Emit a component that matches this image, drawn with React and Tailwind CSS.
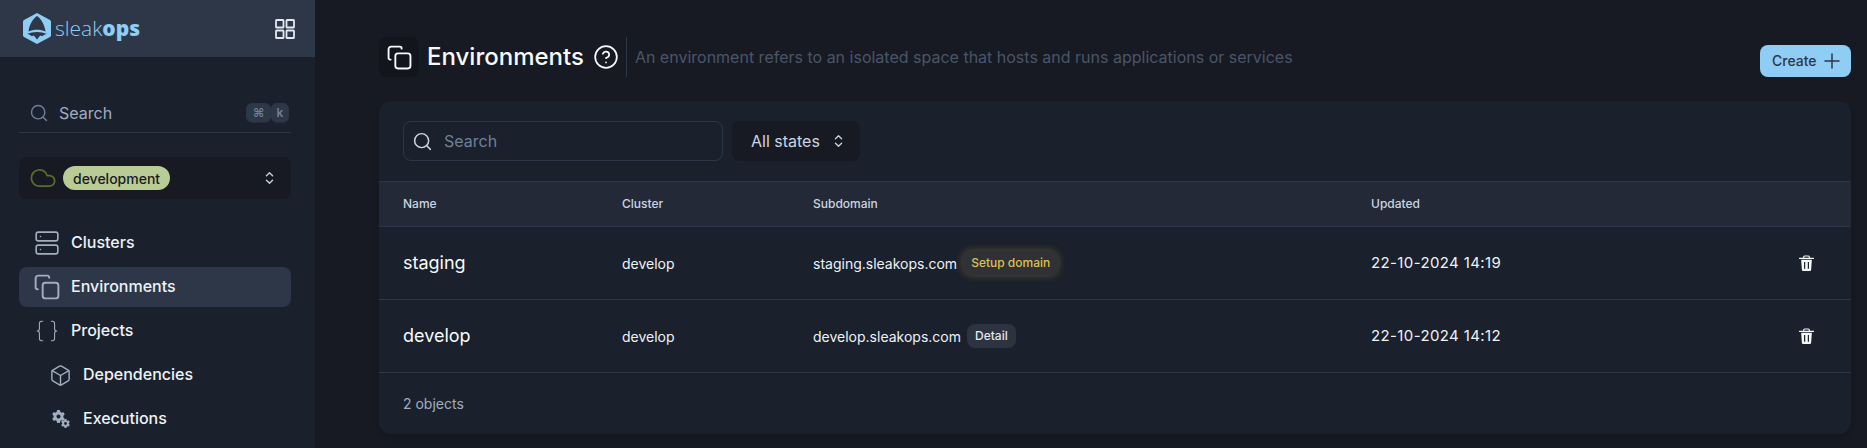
import { Search, Cloud, Server, Braces, Box, CircleHelp, Plus } from "lucide-react";
import { FaGear } from "react-icons/fa6";

const CopyIcon = ({ className }) => (
  <svg viewBox="0 0 24 24" fill="none" stroke="currentColor" strokeWidth="1.8" strokeLinecap="round" strokeLinejoin="round" className={className}>
    <path d="M14 3.5V3a1.5 1.5 0 0 0-1.5-1.5H4A2.5 2.5 0 0 0 1.5 4v8.5A1.5 1.5 0 0 0 3 14h.5" />
    <rect x="8" y="8" width="14.5" height="14.5" rx="2.5" />
  </svg>
);

const UpDown = ({ className }) => (
  <svg viewBox="0 0 10 16" fill="none" stroke="currentColor" strokeWidth="1.5" strokeLinecap="round" strokeLinejoin="round" className={className}>
    <path d="M1.5 5.5 5 2l3.5 3.500" />
    <path d="M1.5 10.500 5 14l3.500-3.500" />
  </svg>
);

const TrashIcon = () => (
  <svg viewBox="0 0 16 18" className="w-[15px] h-[17px] text-[#f7fafc]">
    <path d="M5 3V2a1 1 0 0 1 1-1h4a1 1 0 0 1 1 1v1" fill="none" stroke="currentColor" strokeWidth="1.2" />
    <path d="M.5 3.500h15" stroke="currentColor" strokeWidth="1.2" strokeLinecap="round" />
    <path d="M2.300 5h11.400l-.8 11a1.200 1.200 0 0 1-1.200 1H4.300a1.200 1.200 0 0 1-1.200-1z" fill="currentColor" />
    <path d="M6 7.500v7M10 7.500v7" stroke="#1a202c" strokeWidth="1.3" />
  </svg>
);

const GridIcon = () => (
  <svg viewBox="0 0 20 20" fill="none" stroke="currentColor" strokeWidth="1.8" className="w-5 h-5 text-[#e2e8f0]">
    <rect x="1" y="1" width="7.5" height="7.5" rx="0.6" />
    <rect x="11.5" y="1" width="7.5" height="7.5" rx="0.6" />
    <rect x="1" y="11.5" width="7.5" height="7.5" rx="0.6" />
    <rect x="11.5" y="11.5" width="7.5" height="7.5" rx="0.6" />
  </svg>
);

const Logo = () => (
  <svg viewBox="0 0 30 32" className="w-[30px] h-[33px]">
    <path d="M15 0.500 28 7.500a2 2 0 0 1 1 1.700v13.600a2 2 0 0 1-1 1.700L15 31.500 2 24.500a2 2 0 0 1-1-1.700V9.200a2 2 0 0 1 1-1.700z" fill="#90cdf4" />
    <path d="M15 3.500c3.800 2.500 7.500 8 8.500 15.500-5-2.200-12-2.200-17 0C7.500 11.500 11.200 6 15 3.500z" fill="#2d3748" />
    <path d="M5 21.500c6-2.800 14-2.800 20 0-2 .4-3.500 1-4.800 2.200l-2-.8-3.200 4-3.200-4-2 .8C8.500 22.500 7 21.900 5 21.500z" fill="#2d3748" />
  </svg>
);

const GearsIcon = () => (
  <span className="relative block w-[23px] h-[18px] text-[#a0aec0]">
    <FaGear className="absolute left-[3px] top-0 w-[13px] h-[13px]" />
    <FaGear className="absolute left-[12px] top-[9px] w-[9px] h-[9px]" />
  </span>
);

const NavItem = ({ icon, label, active, sub }) => (
  <div className={`flex items-center h-10 rounded-lg text-[#edf2f7] text-[16px] font-medium gap-[11px] ${active ? "bg-[#2d3748]" : ""} ${sub ? "pl-[30px]" : "pl-[15px]"}`}>
    {icon}
    <span className="-mt-[2px]">{label}</span>
  </div>
);

const Row = ({ name, domain, tag, updated }) => (
  <div className="grid grid-cols-[219px_191px_558px_1fr] items-center h-[73px] pl-6 border-b border-[#2d3748]">
    <span className="text-[18px] text-[#f7fafc] -mt-[2px]">{name}</span>
    <span className="text-[14px] text-[#edf2f7]">develop</span>
    <div className="flex items-center gap-[6px] text-[14px] text-[#edf2f7]">
      <span>{domain}</span>
      {tag}
    </div>
    <div className="flex items-center justify-between pr-[37px]">
      <span className="text-[15px] tracking-[0.025em] text-[#edf2f7]">{updated}</span>
      <TrashIcon />
    </div>
  </div>
);

export default function App() {
  return (
    <div className="flex h-[448px] w-full overflow-hidden bg-[#171a23] font-['Inter',sans-serif]">
      <aside className="w-[315px] shrink-0 bg-[#1a202c] flex flex-col">
        <div className="h-[57px] bg-[#2d3748] flex items-center justify-between pl-[22px] pr-[20px] shrink-0">
          <div className="flex items-center gap-[3px]">
            <Logo />
            <span className="text-[#90cdf4] text-[21px] leading-none font-['Open_Sans',sans-serif] font-light">
              sleak<span className="font-extrabold">ops</span>
            </span>
          </div>
          <GridIcon />
        </div>
        <div className="pl-[19px] pr-[24px]">
          <div className="mt-[37px] h-[39px] flex items-center border-b border-[#2d3748] pl-[10px] pr-[2px]">
            <Search className="w-[20px] h-[20px] text-[#718096]" strokeWidth={1.7} />
            <span className="ml-[10px] text-[16px] text-[#a0aec0]">Search</span>
            <div className="ml-auto flex text-[12px] font-semibold text-[#718096]">
              <span className="w-[25px] h-[20px] flex items-center justify-center rounded-md bg-[#2d3748] border-b border-[#252c3a]">⌘</span>
              <span className="w-[18px] h-[20px] flex items-center justify-center rounded-md bg-[#2d3748] border-b border-[#252c3a]">k</span>
            </div>
          </div>
          <div className="mt-[24px] h-[42px] flex items-center rounded-lg bg-[#171a23] pl-[10px] pr-[17px]">
            <Cloud className="w-[28px] h-[28px] text-[#5c6b2e]" strokeWidth={1.5} />
            <span className="ml-[6px] h-6 px-[10px] flex items-center rounded-full bg-[#b9cc95] text-[#171a23] text-[14px] font-medium">development</span>
            <UpDown className="ml-auto w-[9px] h-[14px] text-[#cbd5e0]" />
          </div>
          <nav className="mt-[24px] flex flex-col gap-1">
            <NavItem label="Clusters" icon={<Server className="w-[26px] h-[26px] text-[#a0aec0]" strokeWidth={1.5} />} />
            <NavItem active label="Environments" icon={<CopyIcon className="w-[26px] h-[26px] text-[#a0aec0]" />} />
            <NavItem label="Projects" icon={<Braces className="w-[26px] h-[26px] text-[#a0aec0]" strokeWidth={1} />} />
            <NavItem sub label="Dependencies" icon={<Box className="w-[23px] h-[23px] text-[#a0aec0]" strokeWidth={1.5} />} />
            <NavItem sub label="Executions" icon={<GearsIcon />} />
          </nav>
        </div>
      </aside>

      <main className="flex-1 pl-[64px] pr-[16px] min-w-0">
        <div className="flex mt-[37px] h-[40px] items-center">
          <div className="w-10 h-10 rounded-lg bg-[#12151c] flex items-center justify-center">
            <CopyIcon className="w-[25px] h-[25px] text-[#f7fafc]" />
          </div>
          <h1 className="ml-[8px] text-[24px] font-medium text-[#f7fafc] -mt-[1px]">Environments</h1>
          <CircleHelp className="ml-[9px] w-[26px] h-[26px] text-[#f7fafc]" strokeWidth={1.6} />
          <div className="ml-[7px] w-px h-10 bg-[#2d3748]" />
          <p className="ml-2 text-[16px] text-[#4a5568] -mt-[1px]">An environment refers to an isolated space that hosts and runs applications or services</p>
          <button className="ml-auto mt-[8px] w-[91px] h-[32px] pl-[12px] pb-[1px] rounded-lg bg-[#90cdf4] text-[#2d3748] text-[14px] font-medium flex items-center gap-[3px] self-start">
            Create
            <Plus className="w-[24px] h-[24px]" strokeWidth={1.5} />
          </button>
        </div>

        <section className="mt-[24px] rounded-xl bg-[#1a202c] h-[333px] shadow-md">
          <div className="h-[80px] flex items-center pl-6 gap-[9px]">
            <div className="w-[320px] h-10 rounded-lg border border-[#2d3748] flex items-center pl-[8px]">
              <Search className="w-[21px] h-[21px] text-[#cbd5e0]" strokeWidth={1.7} />
              <span className="ml-[11px] text-[16px] text-[#718096]">Search</span>
            </div>
            <div className="w-[128px] h-10 rounded-lg bg-[#171a23] flex items-center pl-[19px] gap-[14px] text-[16px] text-[#cbd5e0]">
              All states
              <UpDown className="w-[9px] h-[14px]" />
            </div>
          </div>
          <div className="grid grid-cols-[219px_191px_558px_1fr] items-center h-[46px] pl-6 bg-[#232936] border-y border-[#2d3748] text-[12px] font-medium text-[#cbd5e0]">
            <span>Name</span>
            <span>Cluster</span>
            <span>Subdomain</span>
            <span>Updated</span>
          </div>
          <Row
            name="staging"
            domain="staging.sleakops.com"
            updated="22-10-2024 14:19"
            tag={<span className="h-6 px-2 flex items-center rounded-lg bg-[#2f3136] text-[12px] font-medium text-[#d9c24f] shadow-[0_0_8px_rgba(236,201,75,0.3)]">Setup domain</span>}
          />
          <Row
            name="develop"
            domain="develop.sleakops.com"
            updated="22-10-2024 14:12"
            tag={<span className="h-6 px-2 flex items-center rounded-lg bg-[#2d3340] text-[12px] font-medium text-[#e2e8f0]">Detail</span>}
          />
          <div className="h-[61px] flex items-center pl-6 text-[14px] text-[#a0aec0]">2 objects</div>
        </section>
      </main>
    </div>
  );
}
